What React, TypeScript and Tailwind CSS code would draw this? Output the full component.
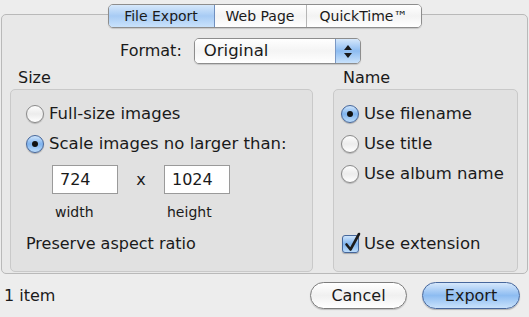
import React from 'react'

function Radio({ checked }: { checked?: boolean }) {
  if (checked) {
    return (
      <span className="w-[18px] h-[18px] shrink-0 rounded-full border border-[#46679b] bg-gradient-to-b from-[#cfe5fb] via-[#7fb3ee] to-[#bcdcfa] shadow-[0_1px_1px_rgba(0,0,0,0.25)] flex items-center justify-center">
        <span className="w-[6px] h-[6px] rounded-full bg-[#111]" />
      </span>
    )
  }
  return (
    <span className="w-[18px] h-[18px] shrink-0 rounded-full border border-[#8a8a8a] bg-gradient-to-b from-[#fdfdfd] via-[#ececec] to-[#ffffff] shadow-[0_1px_1px_rgba(0,0,0,0.2)]" />
  )
}

function Checkbox() {
  return (
    <span className="relative w-[17px] h-[18px] shrink-0 rounded-[3px] border border-[#46679b] bg-gradient-to-b from-[#cfe5fb] via-[#7fb3ee] to-[#bcdcfa] shadow-[0_1px_1px_rgba(0,0,0,0.25)]">
      <svg className="absolute -top-[4px] left-[1px]" width="18" height="22" viewBox="0 0 18 22">
        <path d="M2.5 12.5 L6.5 17.5 L15 2" fill="none" stroke="#1c1c1c" strokeWidth="2.6" strokeLinecap="round" strokeLinejoin="round" />
      </svg>
    </span>
  )
}

function Option({ checked, label }: { checked?: boolean; label: string }) {
  return (
    <div className="h-[30px] flex items-center gap-[5px] text-[16.5px]">
      <Radio checked={checked} />
      <span>{label}</span>
    </div>
  )
}

export default function App() {
  return (
    <div
      className="w-[529px] h-[317px] bg-[#ededed] text-[16px] leading-[20px] text-[#1a1a1a] pt-[14px] px-[1px] overflow-hidden"
      style={{ fontFamily: '"DejaVu Sans", Verdana, sans-serif' }}
    >
      {/* Tab panel */}
      <div className="h-[260px] border border-[#b9b9b9] rounded-[5px] bg-[#e8e8e8] flex flex-col">
        {/* Segmented tabs */}
        <div className="-mt-[11px] flex justify-center">
          <div className="flex h-[24px] rounded-[5px] border border-[#8d8d8d] overflow-hidden text-[14px] shadow-[0_1px_1px_rgba(0,0,0,0.15)]">
            <div className="w-[106px] flex items-center justify-center bg-gradient-to-b from-[#d6e8fb] via-[#a7cbf4] to-[#c9e2fb] border-r border-[#6f8fbf]">
              File Export
            </div>
            <div className="w-[92px] flex items-center justify-center bg-gradient-to-b from-[#ffffff] via-[#f3f3f3] to-[#ffffff] border-r border-[#b5b5b5]">
              Web Page
            </div>
            <div className="w-[114px] flex items-center justify-center bg-gradient-to-b from-[#ffffff] via-[#f3f3f3] to-[#ffffff]">
              QuickTime™
            </div>
          </div>
        </div>

        {/* Format */}
        <div className="mt-[10px] h-[26px] flex items-center pl-[118px]">
          <span>Format:</span>
          <div className="ml-[12px] w-[167px] h-[26px] flex rounded-[5px] border border-[#8d8d8d] overflow-hidden shadow-[0_1px_1px_rgba(0,0,0,0.15)]">
            <div className="flex-1 flex items-center pl-[9px] text-[16.5px] bg-gradient-to-b from-[#ffffff] via-[#f4f4f4] to-[#ffffff]">
              Original
            </div>
            <div className="w-[25px] flex flex-col items-center justify-center gap-[3px] bg-gradient-to-b from-[#d6e8fb] via-[#8dbcf1] to-[#c9e2fb] border-l border-[#7a98c4]">
              <svg width="8" height="5" viewBox="0 0 8 5"><path d="M4 0 L8 5 L0 5 Z" fill="#1a1a1a" /></svg>
              <svg width="8" height="5" viewBox="0 0 8 5"><path d="M0 0 L8 0 L4 5 Z" fill="#1a1a1a" /></svg>
            </div>
          </div>
        </div>

        {/* Groups */}
        <div className="mt-[4px] flex pl-[8px] gap-[20px]">
          <div className="w-[303px] flex flex-col">
            <div className="h-[20px] pl-[8px]">Size</div>
            <div className="mt-[1px] h-[183px] rounded-[5px] border border-[#c9c9c9] bg-[#e1e1e1] pt-[9px] pl-[15px]">
              <Option label="Full-size images" />
              <Option checked label="Scale images no larger than:" />
              <div className="mt-[6px] ml-[26px] flex items-center h-[29px]">
                <div className="w-[66px] h-[29px] bg-white border border-[#9a9a9a] flex items-center pl-[7px]">724</div>
                <div className="w-[46px] text-center">x</div>
                <div className="w-[66px] h-[29px] bg-white border border-[#9a9a9a] flex items-center pl-[7px]">1024</div>
              </div>
              <div className="mt-[8px] ml-[26px] flex h-[20px] items-center text-[14px]">
                <div className="w-[66px] pl-[3px]">width</div>
                <div className="w-[46px]" />
                <div className="w-[66px] pl-[3px]">height</div>
              </div>
              <div className="mt-[12px] h-[20px] flex items-center">Preserve aspect ratio</div>
            </div>
          </div>

          <div className="w-[185px] flex flex-col">
            <div className="h-[20px] pl-[10px]">Name</div>
            <div className="mt-[1px] h-[183px] rounded-[5px] border border-[#c9c9c9] bg-[#e1e1e1] pt-[9px] pl-[7px]">
              <Option checked label="Use filename" />
              <Option label="Use title" />
              <Option label="Use album name" />
              <div className="mt-[45px] h-[20px] flex items-center gap-[5px] pl-[1px] text-[16.5px]">
                <Checkbox />
                <span>Use extension</span>
              </div>
            </div>
          </div>
        </div>
      </div>

      {/* Bottom bar */}
      <div className="mt-[8px] h-[27px] flex items-center pl-[3px] pr-[8px]">
        <span className="flex-1">1 item</span>
        <button className="w-[97px] h-[27px] rounded-full border border-[#7c7c7c] bg-gradient-to-b from-[#ffffff] via-[#f0f0f0] to-[#ffffff] shadow-[0_1px_1px_rgba(0,0,0,0.2)]">
          Cancel
        </button>
        <button className="ml-[15px] w-[98px] h-[27px] rounded-full border border-[#47679c] bg-gradient-to-b from-[#d6e8fb] via-[#8dbcf1] to-[#c9e2fb] shadow-[0_1px_1px_rgba(0,0,0,0.25)]">
          Export
        </button>
      </div>
    </div>
  )
}
